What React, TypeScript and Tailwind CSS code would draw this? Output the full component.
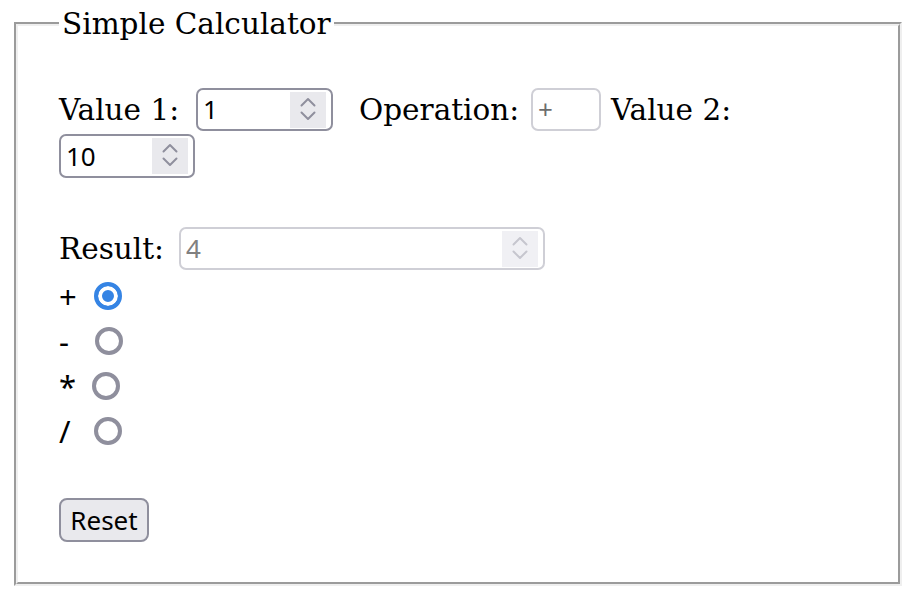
import { useState } from 'react';

const serif = "font-['DejaVu_Serif',serif] text-[29.5px] leading-[34px]";
const sans = "font-['Noto_Sans',sans-serif]";

function Spinner({ muted }: { muted?: boolean }) {
  return (
    <div className={`flex h-[36px] w-[36px] shrink-0 items-center justify-center ${muted ? 'bg-[#f0f0f4]' : 'bg-[#e9e9ed]'}`}>
      <svg width="36" height="36" viewBox="0 0 36 36" fill="none" stroke={muted ? '#c6c6ce' : '#8f8f9d'} strokeWidth="2" strokeLinecap="round" strokeLinejoin="round">
        <path d="M11.5 13.5 L18 7 L24.5 13.5" />
        <path d="M11.5 20.5 L18 27 L24.5 20.5" />
      </svg>
    </div>
  );
}

function NumberBox({
  value,
  onChange,
  className,
  disabled,
}: {
  value: string;
  onChange?: (v: string) => void;
  className: string;
  disabled?: boolean;
}) {
  return (
    <div
      className={`flex items-center rounded-[7px] border-2 bg-white pl-[5px] pr-[5px] ${
        disabled ? 'border-[#cfcfd6]' : 'border-[#8f8f9d]'
      } ${className}`}
    >
      <input
        type="number"
        value={value}
        disabled={disabled}
        onChange={(e) => onChange?.(e.target.value)}
        className={`w-0 min-w-0 flex-1 bg-transparent text-[26px] leading-[35px] outline-none [appearance:textfield] [&::-webkit-inner-spin-button]:appearance-none [&::-webkit-outer-spin-button]:appearance-none ${sans} ${
          disabled ? 'text-[#808080]' : 'text-black'
        }`}
      />
      <Spinner muted={disabled} />
    </div>
  );
}

const ops = [
  { sym: '+', label: 'w-[35px]' },
  { sym: '-', label: 'w-[36px]' },
  { sym: '*', label: 'w-[33px]' },
  { sym: '/', label: 'w-[35px]' },
];

function calc(a: string, b: string, op: string) {
  const x = parseFloat(a);
  const y = parseFloat(b);
  if (isNaN(x) || isNaN(y)) return '';
  if (op === '+') return String(x + y);
  if (op === '-') return String(x - y);
  if (op === '*') return String(x * y);
  return y === 0 ? '' : String(x / y);
}

export default function App() {
  const [a, setA] = useState('1');
  const [b, setB] = useState('10');
  const [op, setOp] = useState('+');
  const [result, setResult] = useState('4');

  const update = (na: string, nb: string, nop: string) => {
    setA(na);
    setB(nb);
    setOp(nop);
    setResult(calc(na, nb, nop));
  };

  return (
    <div className="min-h-screen bg-white pl-[14px] pr-[18px] pt-[7px] text-black">
      <fieldset className="border-4 border-[#efefef] pb-[40px] pl-[41px] pr-[41px] [border-style:groove]">
        <legend className={`px-[3px] ${serif}`}>Simple Calculator</legend>

        {/* inputs */}
        <div className="mt-[47px] flex flex-wrap items-center gap-y-[3px]">
          <span className={`w-[137px] ${serif}`}>Value 1:</span>
          <NumberBox className="h-[43px] w-[137px]" value={a} onChange={(v) => update(v, b, op)} />
          <span className={`ml-[26px] w-[172px] ${serif}`}>Operation:</span>
          <div className="flex h-[43px] w-[70px] items-center rounded-[7px] border-2 border-[#cfcfd6] bg-white pl-[5px]">
            <input
              type="text"
              disabled
              placeholder={op}
              className={`w-full bg-transparent text-[26px] leading-[35px] outline-none placeholder:text-[#6d6d6d] ${sans}`}
            />
          </div>
          <span className={`ml-[10px] ${serif}`}>Value 2:</span>
          <NumberBox className="h-[44px] w-[136px]" value={b} onChange={(v) => update(a, v, op)} />
        </div>

        {/* result */}
        <div className="mt-[49px] flex items-center">
          <span className={`w-[120px] ${serif}`}>Result:</span>
          <NumberBox className="h-[43px] w-[366px]" value={result} disabled />
        </div>

        {/* operation radios */}
        <div className="mt-[3px] flex flex-col">
          {ops.map((o) => (
            <label key={o.sym} className="flex h-[45px] items-center">
              <span className={`${o.label} text-[31px] leading-[42px] ${sans}`}>{o.sym}</span>
              <input
                type="radio"
                name="op"
                checked={op === o.sym}
                onChange={() => update(a, b, o.sym)}
                className="m-0 h-[28px] w-[28px] appearance-none rounded-full border-[4px] border-[#8f8f9d] bg-white checked:border-[#3584e4] checked:bg-[#3584e4] checked:shadow-[inset_0_0_0_4px_#fff]"
              />
            </label>
          ))}
        </div>

        <button
          type="button"
          onClick={() => update('', '', '+')}
          className={`mt-[45px] h-[44px] w-[90px] rounded-[8px] border-2 border-[#8f8f9d] bg-[#e9e9ed] text-[26px] leading-[35px] text-black ${sans}`}
        >
          Reset
        </button>
      </fieldset>
    </div>
  );
}
